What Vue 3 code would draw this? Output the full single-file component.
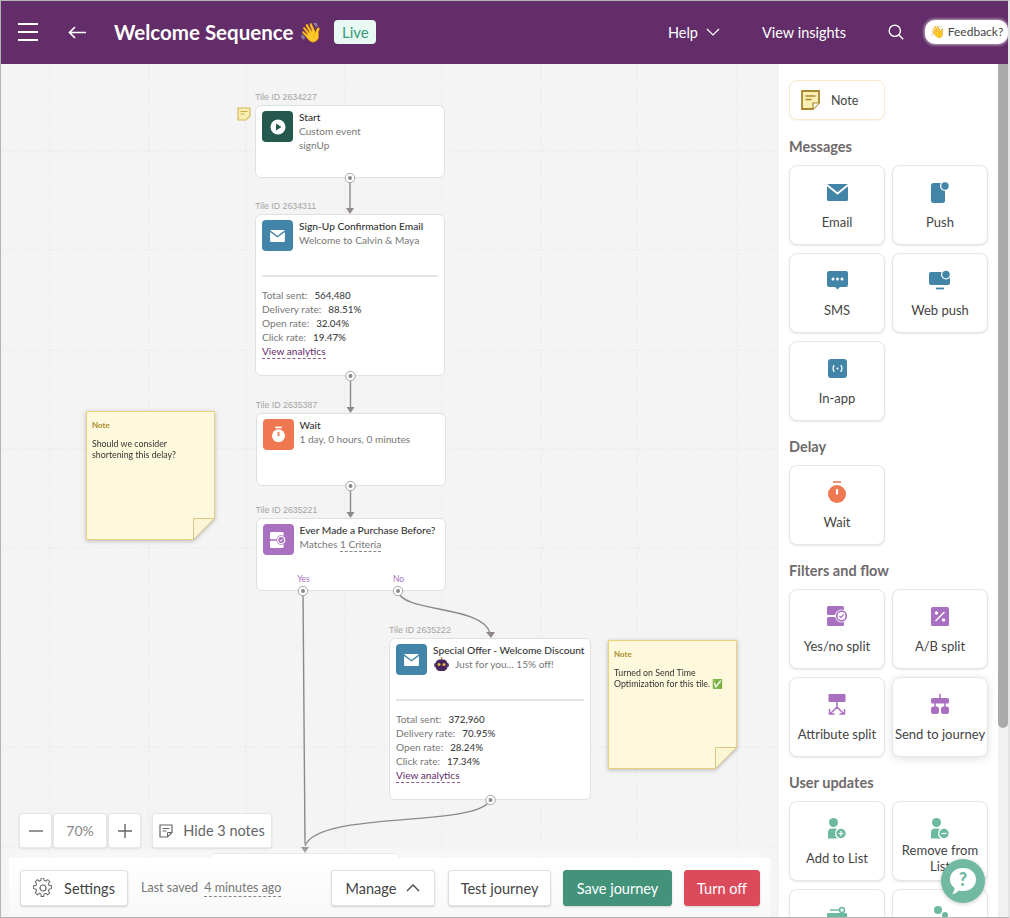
<script setup>
const vLines = [50, 149, 246, 345, 442, 541, 637, 737]
const hLines = [87, 186, 286, 385, 484, 584, 683, 783]

const emailStats = [
  { label: 'Total sent:', value: '564,480' },
  { label: 'Delivery rate:', value: '88.51%' },
  { label: 'Open rate:', value: '32.04%' },
  { label: 'Click rate:', value: '19.47%' },
]
const offerStats = [
  { label: 'Total sent:', value: '372,960' },
  { label: 'Delivery rate:', value: '70.95%' },
  { label: 'Open rate:', value: '28.24%' },
  { label: 'Click rate:', value: '17.34%' },
]
</script>

<template>
  <div class="page">
    <header class="top">
      <button class="burger" aria-label="Menu"><span></span><span></span><span></span></button>
      <svg class="back" width="18" height="13" viewBox="0 0 18 13"><path d="M18 6.500H1.500M7 1 1.500 6.500 7 12" fill="none" stroke="#fff" stroke-width="1.700"/></svg>
      <h1 class="title">Welcome Sequence <span class="wave">👋</span></h1>
      <span class="live">Live</span>
      <span class="spacer"></span>
      <span class="nav help">Help</span>
      <svg class="chev" width="14" height="8" viewBox="0 0 14 8"><path d="M1 1l6 6 6-6" fill="none" stroke="#fff" stroke-width="1.200"/></svg>
      <span class="nav insights">View insights</span>
      <svg class="search" width="16" height="16" viewBox="0 0 16 16"><circle cx="6.800" cy="6.800" r="5.600" fill="none" stroke="#fff" stroke-width="1.400"/><path d="M11 11l4.200 4.200" stroke="#fff" stroke-width="1.500"/></svg>
      <span class="feedback">👋 Feedback?</span>
    </header>

    <div class="main">
      <section class="canvas">
        <svg class="grid" width="779" height="854" viewBox="0 64 779 854">
          <line v-for="x in vLines" :key="'v' + x" :x1="x" :x2="x" y1="64" y2="918" class="gl" />
          <line v-for="y in hLines" :key="'h' + y" x1="0" x2="779" :y1="y + 64" :y2="y + 64" class="gl" />
        </svg>

        <svg class="mini-note" width="14" height="14" viewBox="0 0 14 14">
          <path d="M1 1h12v8l-4 4H1z" fill="#f9eeb2" stroke="#d4b75a" stroke-width="1.100"/>
          <path d="M3.500 4.500h7M3.500 7h4" stroke="#c9a94c" stroke-width="1"/>
        </svg>

        <div class="node n-start">
          <div class="tile-id">Tile ID 2634227</div>
          <div class="card short">
            <div class="head">
              <div class="ci green">
                <svg width="16" height="16" viewBox="0 0 16 16"><circle cx="8" cy="8" r="7.500" fill="#fff"/><path d="M6 4.500v7l5.500-3.500z" fill="#25594d"/></svg>
              </div>
              <div class="ht">
                <div class="ct">Start</div>
                <div class="cs">Custom event</div>
                <div class="cs">signUp</div>
              </div>
            </div>
          </div>
        </div>

        <div class="node n-email">
          <div class="tile-id">Tile ID 2634311</div>
          <div class="card tall">
            <div class="head">
              <div class="ci blue">
                <svg width="15" height="12" viewBox="0 0 21 17"><rect width="21" height="17" rx="1.500" fill="#fff"/><path d="M0 1.500l10.500 8 10.500-8" fill="none" stroke="#4285a8" stroke-width="2"/></svg>
              </div>
              <div class="ht">
                <div class="ct">Sign-Up Confirmation Email</div>
                <div class="cs">Welcome to Calvin &amp; Maya</div>
              </div>
            </div>
            <div class="rule"></div>
            <div class="stats">
              <div v-for="s in emailStats" :key="s.label" class="stat"><span>{{ s.label }}</span><b>{{ s.value }}</b></div>
              <a class="va">View analytics</a>
            </div>
          </div>
        </div>

        <div class="node n-wait">
          <div class="tile-id">Tile ID 2635387</div>
          <div class="card short">
            <div class="head">
              <div class="ci orange">
                <svg width="15" height="17" viewBox="0 0 18 20"><path d="M5 1.500h8" stroke="#fff" stroke-width="2"/><circle cx="9" cy="11.500" r="7.800" fill="#fff"/><path d="M9 7v5" stroke="#f07850" stroke-width="2.200"/></svg>
              </div>
              <div class="ht">
                <div class="ct">Wait</div>
                <div class="cs">1 day, 0 hours, 0 minutes</div>
              </div>
            </div>
          </div>
        </div>

        <div class="node n-split">
          <div class="tile-id">Tile ID 2635221</div>
          <div class="card short">
            <div class="head">
              <div class="ci purple">
                <svg width="16" height="16" viewBox="0 0 20 20"><rect x="0" y="0" width="17" height="9" rx="1.500" fill="#fff"/><rect x="0" y="11" width="17" height="9" rx="1.500" fill="#fff"/><circle cx="14" cy="10" r="6" fill="#a96fc0"/><circle cx="14" cy="10" r="4.400" fill="none" stroke="#fff" stroke-width="1.500"/><path d="M12.200 10l1.400 1.500 2.400-3" fill="none" stroke="#fff" stroke-width="1.200"/></svg>
              </div>
              <div class="ht">
                <div class="ct">Ever Made a Purchase Before?</div>
                <div class="cs">Matches <span class="dash">1 Criteria</span></div>
              </div>
            </div>
            <span class="branch yes">Yes</span>
            <span class="branch no">No</span>
          </div>
        </div>

        <div class="node n-offer">
          <div class="tile-id">Tile ID 2635222</div>
          <div class="card tall">
            <div class="head">
              <div class="ci blue">
                <svg width="15" height="12" viewBox="0 0 21 17"><rect width="21" height="17" rx="1.500" fill="#fff"/><path d="M0 1.500l10.500 8 10.500-8" fill="none" stroke="#4285a8" stroke-width="2"/></svg>
              </div>
              <div class="ht">
                <div class="ct">Special Offer - Welcome Discount</div>
                <div class="cs robot-line">
                  <svg width="15" height="14" viewBox="0 0 15 14"><path d="M7.500 0v3" stroke="#6a4a7c" stroke-width="1"/><circle cx="7.500" cy="1" r="1" fill="#c9a23c"/><rect x="0" y="6" width="15" height="4" rx="1.500" fill="#6a4a7c"/><rect x="1.500" y="2.500" width="12" height="11.500" rx="4.500" fill="#46285f"/><circle cx="5" cy="7.500" r="1.500" fill="#e6b63c"/><circle cx="10" cy="7.500" r="1.500" fill="#e6b63c"/></svg>
                  <span>Just for you... 15% off!</span>
                </div>
              </div>
            </div>
            <div class="rule"></div>
            <div class="stats">
              <div v-for="s in offerStats" :key="s.label" class="stat"><span>{{ s.label }}</span><b>{{ s.value }}</b></div>
              <a class="va">View analytics</a>
            </div>
          </div>
        </div>

        <div class="node n-next"><div class="card next"></div></div>

        <svg class="wires" width="779" height="854" viewBox="0 64 779 854">
          <g fill="none" stroke="#8f8889" stroke-width="1.400">
            <path d="M350 178v30" />
            <path d="M350.500 376v31" />
            <path d="M350.500 486v26" />
            <path d="M303 591l2 253" />
            <path d="M398 591c4 22 84 14 92 42" />
            <path d="M490 800c-12 28-172 10-185 46" />
          </g>
          <g fill="#8f8889">
            <path d="M346 208h8l-4 6z" />
            <path d="M346.500 407h8l-4 6z" />
            <path d="M346.500 512h8l-4 6z" />
            <path d="M486 632h9l-4 6z" />
            <path d="M301 847h8l-4 6z" />
          </g>
          <g fill="#fff" stroke="#a9a5a6" stroke-width="1">
            <circle cx="350" cy="178" r="4.700" />
            <circle cx="350.500" cy="376" r="4.700" />
            <circle cx="350.500" cy="486" r="4.700" />
            <circle cx="303" cy="591" r="4.700" />
            <circle cx="398" cy="591" r="4.700" />
            <circle cx="490.500" cy="800" r="4.700" />
          </g>
          <g fill="#8f8889">
            <circle cx="350" cy="178" r="2" />
            <circle cx="350.500" cy="376" r="2" />
            <circle cx="350.500" cy="486" r="2" />
            <circle cx="303" cy="591" r="2" />
            <circle cx="398" cy="591" r="2" />
            <circle cx="490.500" cy="800" r="2" />
          </g>
        </svg>

        <div class="note note-a">
          <svg class="note-bg" width="129" height="129" viewBox="0 0 129 129">
            <path d="M.5.5h128v107l-21 21H.5z" fill="#fef9dc" stroke="#e8d27a"/>
            <path d="M107.500 128.500v-21h21z" fill="#fbf5d5" stroke="#d6c788"/>
          </svg>
          <div class="note-h">Note</div>
          <div class="note-b">Should we consider shortening this delay?</div>
        </div>
        <div class="note note-b-pos">
          <svg class="note-bg" width="129" height="129" viewBox="0 0 129 129">
            <path d="M.5.5h128v107l-21 21H.5z" fill="#fef9dc" stroke="#e8d27a"/>
            <path d="M107.500 128.500v-21h21z" fill="#fbf5d5" stroke="#d6c788"/>
          </svg>
          <div class="note-h">Note</div>
          <div class="note-b">Turned on Send Time Optimization for this tile. ✅</div>
        </div>

        <div class="zoombar">
          <button class="zb z-minus">
            <svg width="14" height="2" viewBox="0 0 14 2"><path d="M0 1h14" stroke="#666" stroke-width="1.400"/></svg>
          </button>
          <button class="zb z-val">70%</button>
          <button class="zb z-plus">
            <svg width="14" height="14" viewBox="0 0 14 14"><path d="M0 7h14M7 0v14" stroke="#666" stroke-width="1.400"/></svg>
          </button>
          <button class="zb z-notes">
            <svg width="14" height="14" viewBox="0 0 14 14"><path d="M1 1h12v7.500L8.500 13H1z" fill="none" stroke="#666" stroke-width="1.200"/><path d="M3.500 4.500h7M3.500 7h4M8.500 13V8.500H13" fill="none" stroke="#666" stroke-width="1"/></svg>
            Hide 3 notes
          </button>
        </div>

        <footer class="foot">
          <button class="btn settings">
            <svg width="20" height="20" viewBox="0 0 20 20"><path d="M8.400 1h3.200l.5 2.600 1.700.7 2.200-1.500 2.200 2.200-1.500 2.200.7 1.700 2.600.5v3.200l-2.600.5-.7 1.700 1.500 2.200-2.200 2.200-2.200-1.500-1.700.7-.5 2.600H8.400" transform="translate(0 -.9) scale(.92)" fill="none" stroke="#666" stroke-width="1.100"/><path d="M8.400 1l-.5 2.600-1.700.7L4 2.800 1.800 5l1.500 2.200-.7 1.700L0 9.400v3.200l2.600.5.7 1.700-1.500 2.200L4 19.200l2.200-1.500 1.700.7.500 2.600" transform="translate(.6 -.9) scale(.92)" fill="none" stroke="#666" stroke-width="1.100"/><circle cx="10" cy="10" r="3" fill="none" stroke="#666" stroke-width="1.200"/></svg>
            Settings
          </button>
          <span class="saved">Last saved <span class="dash dark">4 minutes ago</span></span>
          <span class="spacer"></span>
          <button class="btn manage">
            Manage
            <svg width="14" height="8" viewBox="0 0 14 8"><path d="M1 7l6-6 6 6" fill="none" stroke="#444" stroke-width="1.300"/></svg>
          </button>
          <button class="btn test">Test journey</button>
          <button class="btn save">Save journey</button>
          <button class="btn off">Turn off</button>
        </footer>
      </section>

      <aside class="side">
        <button class="note-btn">
          <svg width="19" height="20" viewBox="0 0 19 20">
            <path d="M1 1h17v12l-6 6H1z" fill="#f9efb4" stroke="#a8882e" stroke-width="1.800"/>
            <path d="M4.500 6h10M4.500 9.500h6" stroke="#a8882e" stroke-width="1.400"/>
            <path d="M12 19v-6h6" fill="#fff" stroke="#a8882e" stroke-width="1.200"/>
          </svg>
          <span>Note</span>
        </button>

        <h2 class="sec">Messages</h2>
        <div class="tiles">
          <div class="tile">
            <div class="ti"><svg width="21" height="17" viewBox="0 0 21 17"><rect width="21" height="17" rx="1.500" fill="#4285a8"/><path d="M0 1l10.500 8.500L21 1" fill="none" stroke="#fff" stroke-width="1.800"/></svg></div>
            <div class="tl">Email</div>
          </div>
          <div class="tile">
            <div class="ti"><svg width="20" height="22" viewBox="0 0 20 22"><rect x="1" y="2" width="14" height="20" rx="2.500" fill="#4285a8"/><circle cx="15" cy="5" r="5" fill="#fff"/><circle cx="15" cy="5" r="3.700" fill="#4285a8"/></svg></div>
            <div class="tl">Push</div>
          </div>
          <div class="tile">
            <div class="ti"><svg width="21" height="19" viewBox="0 0 21 19"><path d="M2 0h17a2 2 0 012 2v12a2 2 0 01-2 2h-6l-2.500 2.500L8 16H2a2 2 0 01-2-2V2a2 2 0 012-2z" fill="#4285a8"/><circle cx="6" cy="8" r="1.500" fill="#fff"/><circle cx="10.500" cy="8" r="1.500" fill="#fff"/><circle cx="15" cy="8" r="1.500" fill="#fff"/></svg></div>
            <div class="tl">SMS</div>
          </div>
          <div class="tile">
            <div class="ti"><svg width="22" height="20" viewBox="0 0 22 20"><rect x="0" y="2" width="21" height="13" rx="2" fill="#4285a8"/><path d="M7 18.500h8" stroke="#4285a8" stroke-width="1.800"/><circle cx="17" cy="4.500" r="5" fill="#fff"/><circle cx="17" cy="4.500" r="3.700" fill="#4285a8"/></svg></div>
            <div class="tl">Web push</div>
          </div>
          <div class="tile">
            <div class="ti"><svg width="19" height="19" viewBox="0 0 19 19"><rect width="19" height="19" rx="3" fill="#4285a8"/><path d="M6.300 6.300c-1.600 1.800-1.600 4.600 0 6.400M12.700 6.300c1.600 1.800 1.600 4.600 0 6.400" fill="none" stroke="#fff" stroke-width="1.400"/><circle cx="9.500" cy="9.500" r="1" fill="#fff"/></svg></div>
            <div class="tl">In-app</div>
          </div>
        </div>

        <h2 class="sec">Delay</h2>
        <div class="tiles">
          <div class="tile">
            <div class="ti"><svg width="18" height="22" viewBox="0 0 18 22"><path d="M5 1h8" stroke="#f07850" stroke-width="1.600"/><circle cx="9" cy="13" r="9" fill="#f07850"/><path d="M9 8v5.500" stroke="#fff" stroke-width="2.200"/></svg></div>
            <div class="tl">Wait</div>
          </div>
        </div>

        <h2 class="sec">Filters and flow</h2>
        <div class="tiles">
          <div class="tile">
            <div class="ti"><svg width="21" height="20" viewBox="0 0 21 20"><rect x="0" y="0" width="17" height="9" rx="1.500" fill="#a96fc0"/><rect x="0" y="11" width="17" height="9" rx="1.500" fill="#a96fc0"/><circle cx="14.500" cy="10" r="6.500" fill="#fff"/><circle cx="14.500" cy="10" r="4.800" fill="none" stroke="#a96fc0" stroke-width="1.700"/><path d="M12.500 10l1.500 1.600 2.600-3.200" fill="none" stroke="#a96fc0" stroke-width="1.300"/></svg></div>
            <div class="tl">Yes/no split</div>
          </div>
          <div class="tile">
            <div class="ti"><svg width="18" height="19" viewBox="0 0 18 19"><rect width="18" height="19" rx="1.500" fill="#a96fc0"/><path d="M4.500 14L13.500 5" stroke="#fff" stroke-width="1.500"/><circle cx="5.500" cy="6" r="1.700" fill="#fff"/><circle cx="12.500" cy="13" r="1.700" fill="#fff"/></svg></div>
            <div class="tl">A/B split</div>
          </div>
          <div class="tile">
            <div class="ti"><svg width="18" height="21" viewBox="0 0 18 21"><rect x=".5" y="0" width="17" height="8" rx="1" fill="#a96fc0"/><path d="M9 8v5L2 20M9 13l7 7M1.500 15v5h5M16.500 15v5h-5" fill="none" stroke="#a96fc0" stroke-width="1.500"/></svg></div>
            <div class="tl">Attribute split</div>
          </div>
          <div class="tile lifted">
            <div class="ti"><svg width="18" height="20" viewBox="0 0 18 20"><path d="M9 0v5M4 9v4M14 9v4" stroke="#a96fc0" stroke-width="1.500"/><rect y="4" width="18" height="5.500" rx="1.500" fill="#a96fc0"/><rect y="12.500" width="8" height="7.500" rx="2.500" fill="#a96fc0"/><rect x="10" y="12.500" width="8" height="7.500" rx="2.500" fill="#a96fc0"/></svg></div>
            <div class="tl">Send to journey</div>
          </div>
        </div>

        <h2 class="sec">User updates</h2>
        <div class="tiles">
          <div class="tile">
            <div class="ti"><svg width="20" height="21" viewBox="0 0 20 21"><circle cx="6.500" cy="4.500" r="4.500" fill="#6cb9a0"/><path d="M1 20.500v-6a4 4 0 014-4h3a4 4 0 014 4v6z" fill="#6cb9a0"/><circle cx="14" cy="15.500" r="6" fill="#fff"/><circle cx="14" cy="15.500" r="4.700" fill="#6cb9a0"/><path d="M11.500 15.500h5M14 13v5" stroke="#fff" stroke-width="1.200"/></svg></div>
            <div class="tl">Add to List</div>
          </div>
          <div class="tile">
            <div class="ti"><svg width="20" height="21" viewBox="0 0 20 21"><circle cx="6.500" cy="4.500" r="4.500" fill="#6cb9a0"/><path d="M1 20.500v-6a4 4 0 014-4h3a4 4 0 014 4v6z" fill="#6cb9a0"/><circle cx="14" cy="15.500" r="6" fill="#fff"/><circle cx="14" cy="15.500" r="4.700" fill="#6cb9a0"/><path d="M11.500 15.500h5" stroke="#fff" stroke-width="1.200"/></svg></div>
            <div class="tl">Remove from List</div>
          </div>
          <div class="tile">
            <div class="ti"><svg width="20" height="20" viewBox="0 0 20 20"><rect x="0" y="7" width="20" height="6" rx="1" fill="#6cb9a0"/><path d="M3 4h10" stroke="#6cb9a0" stroke-width="1.500"/><circle cx="15" cy="4" r="2.500" fill="none" stroke="#6cb9a0" stroke-width="1.500"/></svg></div>
            <div class="tl"></div>
          </div>
          <div class="tile">
            <div class="ti"><svg width="20" height="20" viewBox="0 0 20 20"><circle cx="8" cy="4" r="4" fill="#6cb9a0"/><circle cx="15" cy="9" r="3" fill="#6cb9a0"/></svg></div>
            <div class="tl"></div>
          </div>
        </div>
      </aside>

      <div class="scroll"><div class="thumb"></div></div>
    </div>

    <button class="bubble" aria-label="Help">
      <svg width="30" height="30" viewBox="0 0 30 30">
        <path d="M15 2c7.500 0 13 4.700 13 11.500S22.500 25 15 25c-1.500 0-3-.2-4.300-.6C9 26.500 6.500 28 4 28c1.500-1.500 2.500-3.500 2.600-6C3.800 20 2 17 2 13.500 2 6.700 7.500 2 15 2z" fill="#fff"/>
      </svg>
      <span>?</span>
    </button>

    <div class="frame"></div>
  </div>
</template>

<style>
html, body { margin: 0; background: #fff; }
</style>

<style scoped>
.page {
  position: relative;
  width: 1010px;
  height: 918px;
  overflow: hidden;
  display: flex;
  flex-direction: column;
  font-family: "Lato", "Noto Sans", sans-serif;
  color: #333;
  background: #fff;
}
button { font-family: inherit; border: 0; background: none; padding: 0; cursor: pointer; }
.frame {
  position: absolute;
  inset: 0;
  border: 1px solid #b4b4b4;
  border-right: 2px solid #e4e4e4;
  pointer-events: none;
}

.top {
  height: 64px;
  flex: none;
  background: #622d69;
  display: flex;
  align-items: center;
  color: #fff;
  padding-left: 18px;
  margin-right: 2px;
}
.burger { display: flex; flex-direction: column; gap: 6.700px; width: 20px; }
.burger span { display: block; height: 1.500px; background: #fff; }
.back { margin-left: 30px; }
.title { font-size: 20.500px; font-weight: 700; margin: 0 0 0 28px; white-space: nowrap; display: flex; align-items: center; }
.wave { font-size: 19px; margin-left: 6px; }
.live {
  margin-left: 11px;
  width: 42px;
  height: 24px;
  line-height: 24px;
  text-align: center;
  background: #e8f8f2;
  color: #3a9a7a;
  border-radius: 4px;
  font-size: 15px;
}
.spacer { flex: 1; }
.nav { font-size: 14.500px; }
.chev { margin-left: 8px; }
.insights { margin-left: 42px; }
.search { margin-left: 42px; }
.feedback {
  margin-left: 21px;
  width: 83px;
  height: 24px;
  line-height: 24px;
  text-align: center;
  background: #fff;
  color: #444;
  border-radius: 10px;
  font-size: 12px;
  box-shadow: 0 0 3px 1px rgba(255, 255, 255, .6);
  white-space: nowrap;
}

.main { flex: 1; display: flex; min-height: 0; }
.canvas { position: relative; width: 779px; flex: none; background: #f4f4f4; overflow: hidden; }
.grid, .wires { position: absolute; left: 0; top: 0; }
.gl { stroke: #e2e2e2; stroke-width: 1; stroke-dasharray: 1 2; }
.mini-note { position: absolute; left: 237px; top: 43px; }

.node { position: absolute; }
.n-start { left: 255px; top: 27px; width: 190px; }
.n-email { left: 255px; top: 136px; width: 190px; }
.n-wait { left: 255.500px; top: 335px; width: 190.500px; }
.n-split { left: 255.500px; top: 440px; width: 190.500px; }
.n-offer { left: 389px; top: 560px; width: 202px; }
.n-next { left: 210px; top: 789px; width: 190px; }
.tile-id { height: 14px; line-height: 13px; font-size: 8.800px; color: #a4a4a4; font-family: "Liberation Sans", sans-serif; }
.card {
  position: relative;
  box-sizing: border-box;
  background: #fff;
  border: 1.200px solid #e0e0e0;
  border-radius: 6px;
  padding: 5px 6px 0;
}
.card.short { height: 73px; }
.card.tall { height: 162px; }
.card.next { height: 60px; }
.head { display: flex; gap: 6px; height: 55px; }
.ci {
  width: 31px;
  height: 31px;
  flex: none;
  border-radius: 4px;
  display: flex;
  align-items: center;
  justify-content: center;
}
.green { background: #25594d; }
.blue { background: #4285a8; }
.orange { background: #f07850; }
.purple { background: #a96fc0; }
.ht { min-width: 0; margin-top: -1px; }
.ct { font-size: 10.200px; line-height: 14px; color: #333; white-space: nowrap; font-weight: 500; }
.cs { font-size: 10.100px; line-height: 14px; color: #777; white-space: nowrap; }
.robot-line { display: flex; align-items: center; gap: 6px; padding-left: 1px; }
.dash { border-bottom: 1px dashed #888; padding-bottom: 1px; }
.rule { height: 1.500px; background: #e4e4e4; }
.stats { margin-top: 11px; font-size: 10.100px; line-height: 14px; }
.stat { display: flex; gap: 7px; color: #777; }
.stat b { color: #444; font-weight: 500; font-size: 9.800px; }
.va { display: inline-block; color: #5f2a6b; line-height: 13px; border-bottom: 1px dashed #8a5a92; }
.branch { position: absolute; bottom: 6px; font-size: 8.500px; color: #a96fc0; line-height: 10px; transform: translateX(-50%); }
.yes { left: 47px; }
.no { left: 142px; }

.note {
  position: absolute;
  width: 129px;
  height: 129px;
  box-sizing: border-box;
  padding: 9px 6px;
  filter: drop-shadow(0 1px 2px rgba(0, 0, 0, .25));
}
.note-a { left: 86px; top: 347px; }
.note-b-pos { left: 608px; top: 576px; }
.note-bg { position: absolute; left: 0; top: 0; }
.note-h { position: relative; font-size: 8px; line-height: 11px; font-weight: 700; color: #a8892e; margin-bottom: 7px; }
.note-b { position: relative; font-size: 8.800px; line-height: 11px; color: #333; }

.zoombar { position: absolute; left: 19px; top: 749px; height: 35px; display: flex; gap: 1px; }
.zb {
  box-sizing: border-box;
  height: 35px;
  background: #fff;
  border: 1px solid #e6e6e6;
  border-radius: 3px;
  box-shadow: 0 1px 2px rgba(0, 0, 0, .12);
  display: flex;
  align-items: center;
  justify-content: center;
  color: #888;
  font-size: 14px;
}
.z-minus { width: 33px; }
.z-val { width: 54px; }
.z-plus { width: 33px; }
.z-notes { width: 120px; margin-left: 10px; gap: 10px; font-size: 14.500px; color: #666; }

.foot {
  position: absolute;
  left: 9px;
  top: 794px;
  width: 761px;
  height: 60px;
  box-sizing: border-box;
  padding: 12px 10px 0 11px;
  background: linear-gradient(#fff, #f8f8f8);
  box-shadow: 0 -6px 14px rgba(255, 255, 255, .5);
  display: flex;
  align-items: flex-start;
}
.btn {
  box-sizing: border-box;
  height: 36px;
  background: #fff;
  border: 1px solid #e0e0e0;
  border-radius: 3px;
  box-shadow: 0 1px 2px rgba(0, 0, 0, .15);
  display: flex;
  align-items: center;
  justify-content: center;
  font-size: 14.500px;
  color: #444;
  white-space: nowrap;
}
.settings { width: 108px; gap: 11px; }
.saved { margin-left: 13px; line-height: 36px; font-size: 12.500px; color: #777; white-space: nowrap; }
.dark { margin-left: 3px; }
.manage { width: 104px; gap: 10px; }
.test { width: 103px; margin-left: 13px; }
.save { width: 109px; margin-left: 12px; background: #43937a; border-color: #43937a; color: #fff; }
.off { width: 76px; margin-left: 12px; background: #dc4b5b; border-color: #dc4b5b; color: #fff; }

.side {
  width: 219px;
  flex: none;
  box-sizing: border-box;
  padding: 16px 0 0 10px;
  background: #fff;
  overflow: hidden;
}
.note-btn {
  box-sizing: border-box;
  width: 96px;
  height: 40px;
  margin-bottom: 1px;
  border: 1.500px solid #f8eccb;
  border-radius: 8px;
  background: #fff;
  box-shadow: 0 1px 2px rgba(0, 0, 0, .06);
  display: flex;
  align-items: center;
  gap: 11px;
  padding-left: 11px;
  font-size: 12.500px;
  color: #444;
}
.sec {
  margin: 0;
  height: 44px;
  line-height: 52px;
  font-size: 14.500px;
  font-weight: 700;
  color: #6f6a6b;
}
.tiles { display: grid; grid-template-columns: 96px 96px; gap: 8px 7px; }
.tile {
  box-sizing: border-box;
  height: 80px;
  padding-top: 14px;
  border: 1.500px solid #e6e6e6;
  border-radius: 8px;
  background: #fff;
  box-shadow: 0 1px 2px rgba(0, 0, 0, .1);
  display: flex;
  flex-direction: column;
  align-items: center;
}
.lifted { box-shadow: 0 2px 8px rgba(0, 0, 0, .12); }
.ti { height: 24px; display: flex; align-items: center; justify-content: center; }
.tl {
  margin-top: 10px;
  height: 16px;
  display: flex;
  align-items: center;
  text-align: center;
  line-height: 16px;
  font-size: 13px;
  color: #444;
}

.scroll { width: 10px; flex: none; background: #f1f1f1; }
.thumb { height: 664px; background: #aaa; border-radius: 0 0 5px 5px; }

.bubble {
  position: absolute;
  left: 941px;
  top: 859px;
  width: 44px;
  height: 44px;
  border-radius: 50%;
  background: #72b9a3;
  box-shadow: 0 1px 4px rgba(0, 0, 0, .2);
  display: flex;
  align-items: center;
  justify-content: center;
}
.bubble span {
  position: absolute;
  left: 0;
  right: 0;
  top: 9px;
  text-align: center;
  font-size: 18px;
  line-height: 22px;
  font-weight: 900;
  color: #72b9a3;
}
</style>
